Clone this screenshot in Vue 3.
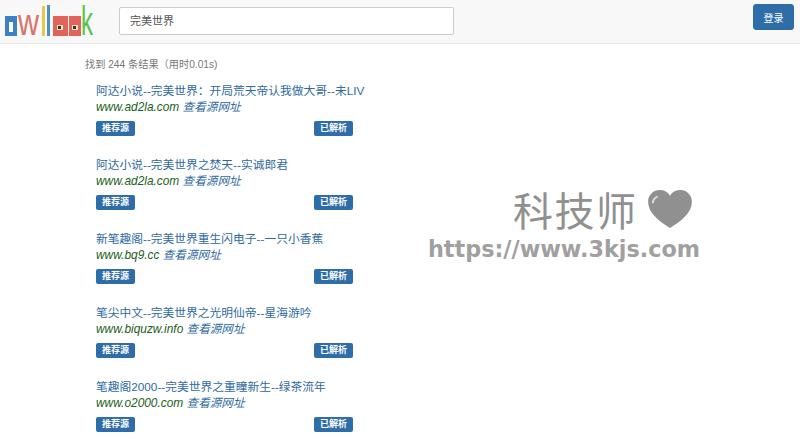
<script setup>
const items = [
  { title: '阿达小说--完美世界：开局荒天帝认我做大哥--未LIV', host: 'www.ad2la.com' },
  { title: '阿达小说--完美世界之焚天--实诚郎君', host: 'www.ad2la.com' },
  { title: '新笔趣阁--完美世界重生闪电子--一只小香蕉', host: 'www.bq9.cc' },
  { title: '笔尖中文--完美世界之光明仙帝--星海游吟', host: 'www.biquzw.info' },
  { title: '笔趣阁2000--完美世界之重瞳新生--绿茶流年', host: 'www.o2000.com' }
]
</script>

<template>
  <div class="page">
    <header class="nav">
      <svg class="logo" width="110" height="42" viewBox="0 0 110 42" aria-label="owllook">
        <rect x="5" y="16" width="12" height="20" fill="#3b82c4" />
        <rect x="9" y="22" width="4" height="10" fill="#fff" />
        <text x="18" y="35" class="lw" fill="#d9736b" textLength="21" lengthAdjust="spacingAndGlyphs">w</text>
        <rect x="42" y="6" width="3" height="30" fill="#e8c84a" />
        <rect x="47" y="5" width="3" height="31" fill="#4a90c8" />
        <rect x="53" y="16" width="15" height="20" fill="#e0645a" />
        <rect x="57" y="25" width="6" height="5" fill="#f3e3c0" />
        <rect x="58" y="26" width="3" height="3" fill="#333" />
        <rect x="69" y="16" width="12" height="20" fill="#e0645a" />
        <rect x="72" y="25" width="6" height="5" fill="#f3e3c0" />
        <rect x="73" y="26" width="3" height="3" fill="#333" />
        <text x="81" y="35" class="lk" fill="#5cc44e" textLength="12" lengthAdjust="spacingAndGlyphs">k</text>
      </svg>
      <div class="search">完美世界</div>
      <button class="login">登录</button>
    </header>
    <main class="results">
      <p class="count">找到 244 条结果（用时0.01s)</p>
      <article v-for="item in items" :key="item.title" class="item">
        <a class="title">{{ item.title }}</a>
        <div class="url"><span class="host">{{ item.host }}</span> <a class="src">查看源网址</a></div>
        <div class="tags">
          <span class="tag">推荐源</span>
          <span class="tag">已解析</span>
        </div>
      </article>
    </main>
    <div class="mark">
      <div class="mark-top">
        <span>科技师</span>
        <svg width="46" height="40" viewBox="0 0 48 42">
          <path d="M24 41C12 33 1 25 1 13 1 6 7 1 13 1c5 0 9 2 11 6 2-4 6-6 11-6 6 0 12 5 12 12 0 12-11 20-23 28z" fill="#909090" />
          <path d="M6 15c0-4 2-6 5-7" stroke="#ddd" stroke-width="2" fill="none" />
        </svg>
      </div>
      <div class="mark-url">https://www.3kjs.com</div>
    </div>
  </div>
</template>

<style scoped>
.page {
  position: relative;
  width: 800px;
  height: 439px;
  overflow: hidden;
  background: #fff;
  font-family: "Liberation Sans", "Noto Sans CJK SC", sans-serif;
  font-size: 12px;
  color: #333;
}
.nav {
  display: flex;
  align-items: flex-start;
  height: 43px;
  background: #f8f8f8;
  border-bottom: 1px solid #e7e7e7;
}
.logo {
  flex: none;
}
.lw {
  font: 36px "Liberation Sans", sans-serif;
}
.lk {
  font: 40px "Liberation Sans", sans-serif;
}
.search {
  box-sizing: border-box;
  width: 335px;
  height: 28px;
  margin: 7px 0 0 9px;
  padding: 0 10px;
  line-height: 26px;
  font-size: 11px;
  color: #555;
  background: #fff;
  border: 1px solid #ccc;
  border-radius: 2px;
}
.login {
  width: 41px;
  height: 26px;
  margin: 4px 6px 0 auto;
  padding: 0;
  font: 10px "Liberation Sans", "Noto Sans CJK SC", sans-serif;
  color: #fff;
  background: #2f6da8;
  border: 1px solid #2e6da4;
  border-radius: 3px;
}
.results {
  padding: 13px 0 0 85px;
}
.count {
  margin: 0 0 8px;
  height: 16px;
  line-height: 16px;
  font-size: 10.2px;
  color: #777;
}
.item {
  box-sizing: border-box;
  width: 268px;
  height: 74px;
  padding: 1px 0 0 11px;
}
.title {
  display: block;
  height: 17px;
  line-height: 17px;
  font-size: 11.75px;
  color: #2f6a9f;
  white-space: nowrap;
}
.url {
  height: 16px;
  line-height: 16px;
  font-size: 11.9px;
  font-style: italic;
  white-space: nowrap;
}
.host {
  color: #1b5e20;
}
.src {
  font-size: 11.6px;
  color: #2f6a9f;
}
.tags {
  display: flex;
  justify-content: space-between;
  margin-top: 6px;
}
.tag {
  box-sizing: border-box;
  width: 39px;
  height: 15px;
  line-height: 15px;
  text-align: center;
  font-size: 9px;
  font-weight: 700;
  color: #fff;
  background: #2f6da8;
  border-radius: 2px;
}
.mark {
  position: absolute;
  left: 428px;
  top: 186px;
  color: #909090;
}
.mark-top {
  display: flex;
  align-items: center;
  gap: 9px;
  margin-left: 85px;
  height: 46px;
  font: 40px "Noto Sans CJK SC", sans-serif;
  letter-spacing: 1.5px;
  white-space: nowrap;
}
.mark-url {
  color: #a0a0a0;
  font: 700 22.3px "DejaVu Sans", sans-serif;
  line-height: 34px;
  white-space: nowrap;
}
</style>
